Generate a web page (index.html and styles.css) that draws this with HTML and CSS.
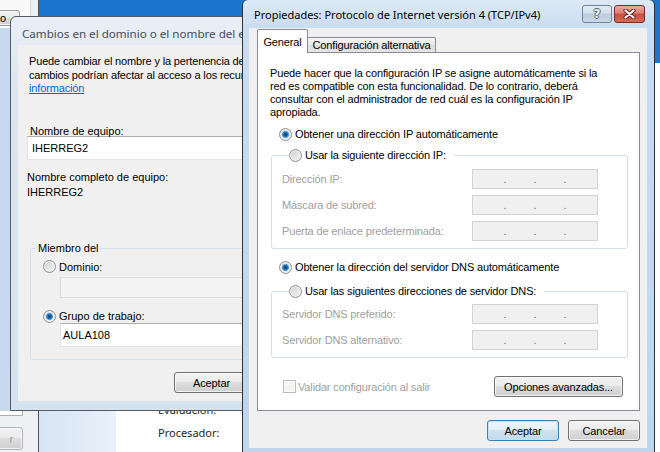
FILE: index.html
```html
<!DOCTYPE html>
<html lang="es">
<head>
<meta charset="utf-8">
<title>Propiedades: Protocolo de Internet versión 4 (TCP/IPv4)</title>
<link rel="stylesheet" href="styles.css">
</head>
<body>
<div class="desktop">
  <div class="sysprops">
    <div class="sp-head">
      <div class="sp-pane"><div class="btn sp-btn">o</div></div>
    </div>
    <div class="sp-body"><div class="sp-strip"></div></div>
    <div class="sp-foot">
      <div class="sp-box"></div>
      <div class="btn sp-btn sp-btn-foot">r</div>
    </div>
  </div>

  <div class="cpanel">
    <div class="cp-banner"></div>
    <div class="cp-body">
      <div class="cp-nav"></div>
      <div class="cp-main">
        <div class="cp-row">Evaluación:</div>
        <div class="cp-row">Procesador:</div>
        <div class="cp-row">Memoria instalada (RAM):</div>
      </div>
    </div>
  </div>

  <div class="window dlg-name">
    <div class="titlebar"><span class="title">Cambios en el dominio o el nombre del equipo</span></div>
    <div class="client">
      <p class="intro">Puede cambiar el nombre y la pertenencia de este equipo. Los<br>cambios podrían afectar al acceso a los recursos de red. Más<br><a class="link" href="#">información</a></p>
      <div class="lbl lbl-name">Nombre de equipo:</div>
      <div class="textbox tb-name">IHERREG2</div>
      <div class="lbl lbl-full">Nombre completo de equipo:</div>
      <div class="lbl lbl-value">IHERREG2</div>
      <fieldset class="member">
        <legend>Miembro del</legend>
        <div class="opt"><span class="radio"></span><span>Dominio:</span></div>
        <div class="textbox tb-domain"></div>
        <div class="opt opt-group"><span class="radio checked"></span><span>Grupo de trabajo:</span></div>
        <div class="textbox tb-group">AULA108</div>
      </fieldset>
      <div class="btn btn-ok-left">Aceptar</div>
    </div>
  </div>

  <div class="window dlg-ip">
    <div class="titlebar">
      <span class="title">Propiedades: Protocolo de Internet versión 4 (TCP/IPv4)</span>
      <div class="caption-buttons">
        <span class="cap cap-help">?</span>
        <span class="cap cap-close"><svg width="13" height="10" viewBox="0 0 13 10"><path d="M2.5 1.5 L10.5 8.5 M10.5 1.5 L2.5 8.5" stroke="#6b2218" stroke-width="4.2" stroke-linecap="round" fill="none"/><path d="M2.5 1.5 L10.5 8.5 M10.5 1.5 L2.5 8.5" stroke="#ffffff" stroke-width="2.2" stroke-linecap="round" fill="none"/></svg></span>
      </div>
    </div>
    <div class="client">
      <div class="tabs">
        <div class="tab tab-active">General</div>
        <div class="tab tab-idle">Configuración alternativa</div>
      </div>
      <div class="tab-panel">
        <p class="para">Puede hacer que la configuración IP se asigne automáticamente si la<br>red es compatible con esta funcionalidad. De lo contrario, deberá<br>consultar con el administrador de red cuál es la configuración IP<br>apropiada.</p>
        <div class="opt opt-auto-ip"><span class="radio checked"></span><span>Obtener una dirección IP automáticamente</span></div>
        <fieldset class="grp grp-ip">
          <legend><span class="opt"><span class="radio"></span><span>Usar la siguiente dirección IP:</span></span></legend>
          <div class="ip-row"><span class="muted">Dirección IP:</span><span class="ipbox"><span class="oct oct-first"></span><span class="dot">.</span><span class="oct"></span><span class="dot">.</span><span class="oct"></span><span class="dot">.</span><span class="oct"></span></span></div>
          <div class="ip-row"><span class="muted">Máscara de subred:</span><span class="ipbox"><span class="oct oct-first"></span><span class="dot">.</span><span class="oct"></span><span class="dot">.</span><span class="oct"></span><span class="dot">.</span><span class="oct"></span></span></div>
          <div class="ip-row"><span class="muted">Puerta de enlace predeterminada:</span><span class="ipbox"><span class="oct oct-first"></span><span class="dot">.</span><span class="oct"></span><span class="dot">.</span><span class="oct"></span><span class="dot">.</span><span class="oct"></span></span></div>
        </fieldset>
        <div class="opt opt-auto-dns"><span class="radio checked"></span><span>Obtener la dirección del servidor DNS automáticamente</span></div>
        <fieldset class="grp grp-dns">
          <legend><span class="opt"><span class="radio"></span><span>Usar las siguientes direcciones de servidor DNS:</span></span></legend>
          <div class="ip-row"><span class="muted">Servidor DNS preferido:</span><span class="ipbox"><span class="oct oct-first"></span><span class="dot">.</span><span class="oct"></span><span class="dot">.</span><span class="oct"></span><span class="dot">.</span><span class="oct"></span></span></div>
          <div class="ip-row"><span class="muted">Servidor DNS alternativo:</span><span class="ipbox"><span class="oct oct-first"></span><span class="dot">.</span><span class="oct"></span><span class="dot">.</span><span class="oct"></span><span class="dot">.</span><span class="oct"></span></span></div>
        </fieldset>
        <div class="validate-row">
          <label class="check"><span class="checkbox"></span><span>Validar configuración al salir</span></label>
          <div class="btn btn-adv">Opciones avanzadas...</div>
        </div>
      </div>
      <div class="footer">
        <div class="btn btn-dlg btn-default">Aceptar</div>
        <div class="btn btn-dlg">Cancelar</div>
      </div>
    </div>
  </div>
</div>
</body>
</html>
```

FILE: styles.css
```css
* { box-sizing: border-box; }
html, body { margin: 0; padding: 0; }
body {
  width: 660px; height: 452px; overflow: hidden; background: #fff;
  font-family: "Liberation Sans", Arial, sans-serif; font-size: 11px; color: #000;
}
.desktop { position: relative; width: 660px; height: 452px; overflow: hidden; }

/* generic Win7 button */
.btn {
  display: flex; align-items: center; justify-content: center;
  border: 1px solid #707070; border-radius: 3px;
  background: linear-gradient(#f2f2f2 0%, #ebebeb 45%, #dddddd 50%, #cfcfcf 100%);
  box-shadow: inset 0 0 0 1px rgba(255,255,255,.7);
  white-space: nowrap; letter-spacing: -0.15px;
}

/* background: system properties window */
.sysprops { position: absolute; left: 0; top: 0; width: 38px; height: 452px; background: #eef0f3; display: flex; flex-direction: column; }
.sp-head { height: 28px; flex: none; display: flex; }
.sp-pane { width: 31px; background: #f9f9f9; border-right: 1px solid #d6d6d6; padding-top: 10px; overflow: hidden; }
.sp-btn { width: 70px; height: 16px; margin-left: -50px; justify-content: flex-end; padding-right: 13px; border-color: #9a9a9a; }
.sp-body { flex: 1; min-height: 0; display: flex; }
.sp-strip { width: 10px; background: #c6d9ee; }
.sp-foot { height: 41px; flex: none; }
.sp-box { width: 23px; height: 5px; background: #fff; border-right: 1px solid #adb2b8; border-bottom: 1px solid #adb2b8; }
.sp-btn-foot { width: 73px; height: 23px; margin-top: 11px; padding-right: 9px; color: #9aa0a6; border-color: #adb2b5; }

/* background: control panel window */
.cpanel { position: absolute; left: 38px; top: 0; width: 622px; height: 452px; border-left: 1px solid #4f4f4f; display: flex; flex-direction: column; background: #fff; overflow: hidden; }
.cp-banner { height: 63px; flex: none; background: #1b76cf; }
.cp-body { flex: 1; min-height: 0; display: flex; }
.cp-nav { width: 77px; flex: none; background: linear-gradient(to right, #d7e4f4, #e9f1fa); }
.cp-main { flex: 1; padding: 335px 0 0 42px; font-family: "Noto Sans", sans-serif; font-size: 11px; color: #1e1e1e; }
.cp-row { height: 23px; line-height: 23px; white-space: nowrap; }

/* windows */
.window { position: absolute; display: flex; flex-direction: column; border: 1px solid #2d3136; border-radius: 6px 6px 0 0; }
.titlebar { display: flex; flex: none; height: 28px; }
.title { font-family: "Noto Sans", sans-serif; font-size: 11px; white-space: nowrap; }
.client { background: #f0f0f0; }

/* left dialog (inactive) */
.dlg-name { left: 10px; top: 16px; width: 340px; height: 395px; padding: 0 7px 9px; background: linear-gradient(#eaeff6, #dde6f0 60px, #d6e2ef); border-color: #535b64; }
.dlg-name .titlebar { padding: 4px 0 0 4px; align-items: center; }
.dlg-name .title { color: #434d59; font-size: 11.6px; }
.dlg-name .client { flex: 1; padding-top: 10px; overflow: hidden; }
.intro { margin: 0 0 0 11px; line-height: 13.5px; letter-spacing: -0.15px; white-space: nowrap; }
.link { color: #0066cc; text-decoration: underline; }
.lbl { line-height: 13px; white-space: nowrap; }
.lbl-name { margin: 29.5px 0 0 12px; }
.textbox { height: 24px; background: #fff; border: 1px solid #e2e3ea; border-top-color: #abadb3; line-height: 22px; white-space: nowrap; }
.tb-name { margin: -2px 0 0 9px; padding-left: 4px; }
.lbl-full { margin: 11px 0 0 9px; }
.lbl-value { margin: 2px 0 0 9px; }
.member { margin: 43px 12px 0; padding: 5px 0 12px; border: 1px solid #d5dfe5; border-radius: 3px; min-width: 0; }
.member legend { margin-left: 5px; padding: 0 2px; line-height: 13px; }
.opt { display: flex; align-items: center; gap: 3px; height: 13px; white-space: nowrap; }
.member .opt { margin-left: 12px; }
.tb-domain { height: 21px; margin: 4px 0 0 29px; background: #f4f4f4; border-color: #d9dbe0; }
.member .opt-group { margin-top: 11.5px; }
.tb-group { margin: 0.5px 0 0 29px; padding-left: 2px; }
.btn-ok-left { width: 75px; height: 21px; margin: 12px 0 0 156px; }

/* radio / checkbox */
.radio {
  flex: none; width: 13px; height: 13px; border-radius: 50%; border: 1px solid #8e8f8f;
  background: linear-gradient(135deg, #c9cdd2, #f7f7f7);
  box-shadow: inset 0 0 0 1px #f4f4f4;
}
.radio.checked {
  background: radial-gradient(circle at 50% 50%, #123d6e 0, #1c5ea3 1.8px, #58b2ea 3.4px, rgba(88,178,234,0) 3.8px), linear-gradient(135deg, #c9cdd2, #f7f7f7);
}
.checkbox { flex: none; width: 13px; height: 13px; border: 1px solid #bcbcbc; background: #f4f4f4; box-shadow: inset 0 0 0 1px #fbfbfb; }

/* right dialog (active) */
.dlg-ip { left: 242px; top: -1px; width: 413px; height: 470px; padding: 0 7px 0 6px; background: linear-gradient(#dde9f5, #c9dcf0 28px, #bed5ec); }
.dlg-ip .titlebar { align-items: flex-start; }
.dlg-ip .title { padding: 2px 0 0 5px; line-height: 26px; color: #000; }
.caption-buttons { display: flex; gap: 2px; margin: 5px 2px 0 auto; }
.cap { height: 18px; border-radius: 3px; display: flex; align-items: center; justify-content: center; }
.cap-help {
  width: 30px; border: 1px solid #72839a;
  background: linear-gradient(#e6edf5, #d3deea 45%, #bccbdd 50%, #c9d7e6);
  color: #fff; font: bold 12px "DejaVu Sans", sans-serif; line-height: 16px;
  text-shadow: -1px 0 #4d5d70, 1px 0 #4d5d70, 0 -1px #4d5d70, 0 1px #4d5d70;
}
.cap-close { width: 31px; border: 1px solid #7a2a20; background: linear-gradient(#eaaaa0, #d98072 45%, #c7503f 50%, #d26c58); }
.dlg-ip .client { flex: none; height: 420px; padding-top: 1px; }

.tabs { display: flex; align-items: flex-end; height: 24px; margin-left: 8px; position: relative; z-index: 1; }
.tab { border: 1px solid #898c95; border-bottom: 0; border-radius: 2px 2px 0 0; display: flex; align-items: center; justify-content: center; white-space: nowrap; letter-spacing: -0.15px; }
.tab-active { width: 51px; height: 24px; background: #fff; }
.tab-idle { width: 129px; height: 15px; margin: 0 0 1px -1px; background: linear-gradient(#f4f4f4, #e9e9e9 50%, #dedede 50%, #e4e4e4); }
.tab-panel { margin: -1px 0 0 8px; width: 383px; height: 359px; padding: 13.5px 12px 0; background: #fff; border: 1px solid #898c95; }

.para { margin: 0; line-height: 13px; letter-spacing: -0.15px; white-space: nowrap; }
.tab-panel .opt { letter-spacing: -0.15px; }
.opt-auto-ip { margin: 9px 0 0 9px; }
.grp { margin: 8px 0 0 1px; width: 357px; padding: 7.5px 29px 7px 10px; border: 1px solid #d5dfe5; border-radius: 3px; min-width: 0; }
.grp legend { margin-left: 7px; padding: 0 8px 0 0; line-height: 13px; }
.ip-row { display: flex; align-items: center; justify-content: space-between; height: 20px; letter-spacing: -0.15px; }
.ip-row + .ip-row { margin-top: 6px; }
.muted { color: #a0a0a0; white-space: nowrap; }
.ipbox { display: flex; width: 126px; height: 20px; border: 1px solid #cfd3d8; background: #f0f0f0; line-height: 18px; color: #707070; }
.oct { width: 26px; }
.oct-first { width: 30px; }
.dot { width: 4px; text-align: center; }
.opt-auto-dns { margin: 11.5px 0 0 9px; }
.grp-dns { margin-top: 11px; padding-top: 6.5px; }
.validate-row { display: flex; align-items: center; justify-content: space-between; margin-top: 18px; height: 21px; }
.check { display: flex; align-items: center; gap: 2px; margin-left: 13px; color: #a0a0a0; letter-spacing: -0.15px; white-space: nowrap; }
.btn-adv { width: 129px; height: 21px; margin-right: 4px; }
.footer { display: flex; justify-content: flex-end; gap: 9px; margin-top: 9px; padding-right: 7px; }
.btn-dlg { width: 72px; height: 21px; }
.btn-default { border-color: #3c7fb1; background: linear-gradient(#eef6fb, #e3eff8 45%, #cfe2f0 50%, #c2d9ea); box-shadow: inset 0 0 0 1px #bfe4f8; }
```
